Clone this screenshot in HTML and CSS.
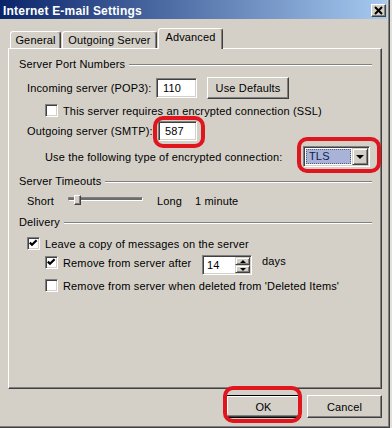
FILE: index.html
```html
<!doctype html>
<html>
<head>
<meta charset="utf-8">
<title>Internet E-mail Settings</title>
<link rel="stylesheet" href="styles.css">
</head>
<body>
<div class="window">
	<div class="titlebar">
		<span class="title">Internet E-mail Settings</span>
		<span class="close">
			<svg width="13" height="11" viewBox="0 0 13 11"><path d="M3 2 L10 9 M10 2 L3 9" stroke="#000" stroke-width="2"/></svg>
		</span>
	</div>
	<div class="content">
		<div class="tabs">
			<div class="tab tab-general">General</div>
			<div class="tab tab-outgoing">Outgoing Server</div>
			<div class="tab tab-advanced active">Advanced</div>
		</div>
		<div class="panel">
			<!--端口-->
			<div class="group-head">Server Port Numbers</div>
			<div class="group-body">
				<div class="row row-incoming">
					<span class="label label-incoming">Incoming server (POP3):</span>
					<span class="field field-incoming">110</span>
					<button class="btn btn-defaults">Use Defaults</button>
				</div>
				<div class="row row-check row-ssl">
					<span class="check"></span>
					<span>This server requires an encrypted connection (SSL)</span>
				</div>
				<div class="row row-outgoing">
					<span class="label label-outgoing">Outgoing server (SMTP):</span>
					<span class="mark-wrap">
						<span class="field field-outgoing">587</span>
						<span class="ring ring-smtp"></span>
					</span>
				</div>
				<div class="row row-encrypt">
					<span class="label label-encrypt">Use the following type of encrypted connection:</span>
					<span class="mark-wrap">
						<span class="combo">
							<span class="combo-value">TLS</span>
							<span class="combo-btn"><span class="arrow-down"></span></span>
						</span>
						<span class="ring ring-tls"></span>
					</span>
				</div>
			</div>
			<!--超时-->
			<div class="group-head head-timeouts">Server Timeouts</div>
			<div class="group-body">
				<div class="row row-slider">
					<span class="label label-short">Short</span>
					<span class="track"><span class="thumb"></span></span>
					<span class="label label-long">Long</span>
					<span>1 minute</span>
				</div>
			</div>
			<!--投递-->
			<div class="group-head head-delivery">Delivery</div>
			<div class="group-body">
				<div class="row row-leave">
					<span class="check checked"><svg width="11" height="11" viewBox="0 0 11 11"><polyline points="1.8,4.6 4,6.8 8.6,2.2" fill="none" stroke="#000" stroke-width="2.2"/></svg></span>
					<span>Leave a copy of messages on the server</span>
				</div>
				<div class="row row-check row-after">
					<span class="check checked"><svg width="11" height="11" viewBox="0 0 11 11"><polyline points="1.8,4.6 4,6.8 8.6,2.2" fill="none" stroke="#000" stroke-width="2.2"/></svg></span>
					<span class="label label-after">Remove from server after</span>
					<span class="spin">
						<span class="spin-value">14</span>
						<span class="spin-btns">
							<span class="spin-btn"><span class="arrow-up"></span></span>
							<span class="spin-btn"><span class="arrow-down small"></span></span>
						</span>
					</span>
					<span class="days">days</span>
				</div>
				<div class="row row-check row-deleted">
					<span class="check"></span>
					<span>Remove from server when deleted from 'Deleted Items'</span>
				</div>
			</div>
		</div>
		<div class="buttons">
			<span class="mark-wrap">
				<button class="btn btn-ok">OK</button>
				<span class="ring ring-ok"></span>
			</span>
			<button class="btn btn-cancel">Cancel</button>
		</div>
	</div>
</div>
</body>
</html>
```

FILE: styles.css
```css
	*
	{
		box-sizing: border-box;
	}
	html
	{
		background: #e2e0dc;
	}
	body
	{
		margin: 0;
		font-family: "Liberation Sans", Arial, sans-serif;
		font-size: 11px;
		letter-spacing: 0.15px;
		color: #000;
	}
	/*窗口*/
	.window
	{
		width: 390px;
		height: 428px;
		background: #d4d0c8;
		border-right: 1px solid #404040;
		border-bottom: 1px solid #404040;
		box-shadow: inset -1px -1px #808080;
		padding-right: 2px;
	}
	.titlebar
	{
		height: 19px;
		display: flex;
		align-items: flex-start;
		padding: 4px 1px 0 3px;
		background: linear-gradient(to right, #0a246a, #a6caf0);
	}
	.title
	{
		color: #fff;
		font-weight: bold;
		font-size: 12px;
		letter-spacing: 0.2px;
		line-height: 14px;
	}
	.close
	{
		margin-left: auto;
		width: 15px;
		height: 13px;
		background: #d4d0c8;
		border: 1px solid;
		border-color: #fff #404040 #404040 #fff;
		box-shadow: inset -1px -1px #808080;
		display: flex;
		align-items: center;
		justify-content: center;
	}
	.content
	{
		padding: 0 5px 0 8px;
	}
	/*标签页*/
	.tabs
	{
		display: flex;
		align-items: flex-end;
		height: 20px;
		margin-top: 9px;
		padding-left: 2px;
	}
	.tab
	{
		height: 17px;
		border-top: 1px solid #fff;
		border-left: 1px solid #fff;
		border-right: 1px solid #404040;
		box-shadow: inset -1px 0 #808080;
		border-radius: 3px 3px 0 0;
		text-align: center;
		line-height: 16px;
		background: #d4d0c8;
	}
	.tab-general
	{
		width: 51px;
		margin-right: 1px;
	}
	.tab-outgoing
	{
		width: 95px;
	}
	.tab-advanced
	{
		width: 65px;
		margin-left: 1px;
	}
	.tab.active
	{
		height: 21px;
		margin-bottom: -1px;
		line-height: 17px;
		padding-bottom: 3px;
		position: relative;
		z-index: 1;
	}
	.panel
	{
		height: 341px;
		border: 1px solid;
		border-color: #fff #404040 #404040 #fff;
		box-shadow: inset -1px -1px #808080;
		padding: 9px 9px 0 10px;
	}
	/*分组*/
	.group-head
	{
		display: flex;
		align-items: center;
		height: 13px;
		line-height: 13px;
	}
	.group-head::after
	{
		content: "";
		flex: 1;
		margin-left: 4px;
		border-top: 1px solid #808080;
		border-bottom: 1px solid #fff;
	}
	.head-timeouts, .head-delivery
	{
		margin-top: 8px;
	}
	.group-body
	{
		padding-left: 8px;
	}
	.row
	{
		display: flex;
		align-items: center;
		white-space: nowrap;
	}
	.row-check
	{
		padding-left: 18px;
	}
	.row-incoming
	{
		margin-top: 6px;
		height: 22px;
	}
	.row-ssl
	{
		margin-top: 5px;
		height: 13px;
	}
	.row-outgoing
	{
		margin-top: 4px;
		height: 20px;
	}
	.row-encrypt
	{
		margin-top: 5px;
		height: 21px;
		padding-left: 18px;
	}
	.row-slider
	{
		margin-top: 6px;
		height: 14px;
	}
	.row-leave
	{
		margin-top: 8px;
		height: 13px;
	}
	.row-after
	{
		margin-top: 6px;
		height: 13px;
	}
	.row-deleted
	{
		margin-top: 10px;
		height: 13px;
	}
	.label
	{
		flex: none;
	}
	.label-incoming { width: 129px; }
	.label-outgoing { width: 131px; }
	.label-encrypt { width: 258px; }
	.label-short { width: 41px; }
	.label-long { width: 38px; }
	.label-after { width: 139px; }
	/*控件*/
	.field
	{
		display: block;
		height: 20px;
		background: #fff;
		border: 1px solid;
		border-color: #808080 #fff #fff #808080;
		box-shadow: inset 1px 1px #404040, inset -1px -1px #d4d0c8;
		padding-left: 6px;
		line-height: 18px;
	}
	.field-incoming { width: 41px; }
	.field-outgoing { width: 39px; }
	.btn
	{
		background: #d4d0c8;
		border: 1px solid;
		border-color: #fff #404040 #404040 #fff;
		box-shadow: inset -1px -1px #808080;
		font: inherit;
		letter-spacing: inherit;
		color: #000;
		padding: 0;
		text-align: center;
	}
	.btn-defaults
	{
		width: 82px;
		height: 22px;
		margin-left: 10px;
	}
	.check
	{
		flex: none;
		width: 13px;
		height: 13px;
		margin-right: 5px;
		background: #fff;
		border: 1px solid;
		border-color: #808080 #fff #fff #808080;
		box-shadow: inset 1px 1px #404040, inset -1px -1px #d4d0c8;
	}
	.check svg
	{
		display: block;
	}
	.combo
	{
		display: flex;
		width: 67px;
		height: 21px;
		padding: 1px;
		background: #fff;
		border: 1px solid;
		border-color: #808080 #fff #fff #808080;
		box-shadow: inset 1px 1px #404040, inset -1px -1px #d4d0c8;
	}
	.combo-value
	{
		flex: 1;
		margin: 1px;
		padding-left: 2px;
		line-height: 13px;
		background: #a9b3d8;
		color: #0c1c50;
		border: 1px dotted #55608a;
	}
	.combo-btn, .spin-btn
	{
		display: flex;
		align-items: center;
		justify-content: center;
		background: #d4d0c8;
		border: 1px solid;
		border-color: #d4d0c8 #404040 #404040 #d4d0c8;
		box-shadow: inset 1px 1px #fff, inset -1px -1px #808080;
	}
	.combo-btn
	{
		width: 16px;
		height: 17px;
	}
	.arrow-down
	{
		width: 0;
		height: 0;
		border-left: 4px solid transparent;
		border-right: 4px solid transparent;
		border-top: 4px solid #000;
	}
	.arrow-down.small, .arrow-up
	{
		border-left-width: 3px;
		border-right-width: 3px;
	}
	.arrow-down.small
	{
		border-top-width: 3px;
	}
	.arrow-up
	{
		width: 0;
		height: 0;
		border-left: 3px solid transparent;
		border-right: 3px solid transparent;
		border-bottom: 3px solid #000;
	}
	.spin
	{
		align-self: flex-start;
		margin-top: -1px;
		display: flex;
		width: 50px;
		height: 20px;
		padding: 1px;
		background: #fff;
		border: 1px solid;
		border-color: #808080 #fff #fff #808080;
		box-shadow: inset 1px 1px #404040, inset -1px -1px #d4d0c8;
	}
	.spin-value
	{
		flex: 1;
		padding-left: 3px;
		line-height: 17px;
	}
	.spin-btns
	{
		display: flex;
		flex-direction: column;
		width: 15px;
	}
	.spin-btn
	{
		height: 8px;
	}
	.days
	{
		margin-left: 10px;
		margin-top: -3px;
	}
	/*滑块*/
	.track
	{
		position: relative;
		align-self: flex-start;
		margin-top: 3px;
		width: 75px;
		height: 4px;
		margin-right: 14px;
		background: #6c6c6c;
		border: 1px solid;
		border-color: #808080 #fff #fff #808080;
	}
	.thumb
	{
		position: absolute;
		left: 5px;
		top: -3px;
		width: 7px;
		height: 10px;
		background: #d4d0c8;
		border: 1px solid;
		border-color: #fff #404040 #404040 #fff;
		box-shadow: inset -1px -1px #808080;
	}
	/*底部按钮*/
	.buttons
	{
		display: flex;
		justify-content: flex-end;
		gap: 6px;
		margin-top: 6px;
	}
	.buttons .btn
	{
		width: 75px;
		height: 23px;
	}
	.btn-ok
	{
		display: block;
		border-color: #000;
		box-shadow: inset 1px 1px #fff, inset -1px -1px #404040, inset -2px -2px #808080;
	}
	/*红色标记*/
	.mark-wrap
	{
		position: relative;
		display: block;
	}
	.ring
	{
		position: absolute;
		border: 4px solid #e0161f;
		border-radius: 10px;
		pointer-events: none;
	}
	.ring-smtp
	{
		left: -5px;
		right: -8px;
		top: -5px;
		bottom: -7px;
	}
	.ring-tls
	{
		left: -6px;
		right: -11px;
		top: -9px;
		bottom: -6px;
	}
	.ring-ok
	{
		left: -3px;
		right: -1px;
		top: -9px;
		bottom: -5px;
	}
```
